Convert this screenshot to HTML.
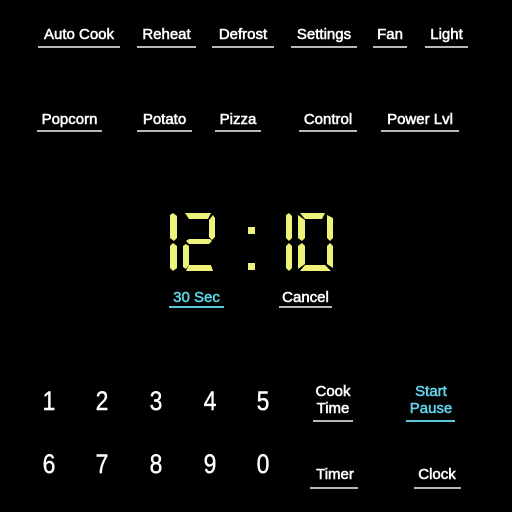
<!DOCTYPE html>
<html><head><style>
body{margin:0;width:512px;height:512px;background:#000;overflow:hidden;position:relative;font-family:"Liberation Sans",Arial,sans-serif;color:#fff}
.t{position:absolute;font-size:15px;line-height:15px;text-align:center;white-space:nowrap;-webkit-text-stroke:0.55px currentColor}
.u{position:absolute;height:2px;background:#b8b8b8}
.c{color:#5fd3e6}
.n{position:absolute;font-size:27px;line-height:26px;width:30px;text-align:center;transform:scaleX(0.85);-webkit-text-stroke:0.4px #fff}
</style></head><body>
<div class="t" style="left:38px;width:82px;top:27px">Auto Cook</div><div class="u" style="left:38px;width:82px;top:46px"></div>
<div class="t" style="left:137px;width:59px;top:27px">Reheat</div><div class="u" style="left:137px;width:59px;top:46px"></div>
<div class="t" style="left:212px;width:62px;top:27px">Defrost</div><div class="u" style="left:212px;width:62px;top:46px"></div>
<div class="t" style="left:291px;width:66px;top:27px">Settings</div><div class="u" style="left:291px;width:66px;top:46px"></div>
<div class="t" style="left:373px;width:34px;top:27px">Fan</div><div class="u" style="left:373px;width:34px;top:46px"></div>
<div class="t" style="left:425px;width:43px;top:27px">Light</div><div class="u" style="left:425px;width:43px;top:46px"></div>

<div class="t" style="left:37px;width:65px;top:112px">Popcorn</div><div class="u" style="left:37px;width:65px;top:130px"></div>
<div class="t" style="left:137px;width:55px;top:112px">Potato</div><div class="u" style="left:137px;width:55px;top:130px"></div>
<div class="t" style="left:215px;width:46px;top:112px">Pizza</div><div class="u" style="left:215px;width:46px;top:130px"></div>
<div class="t" style="left:299px;width:58px;top:112px">Control</div><div class="u" style="left:299px;width:58px;top:130px"></div>
<div class="t" style="left:381px;width:78px;top:112px">Power Lvl</div><div class="u" style="left:381px;width:78px;top:130px"></div>

<svg style="position:absolute;left:0;top:0" width="512" height="512" fill="#eef27a">
<polygon points="170,215 173,213 177,216 177,238 174,241 170,238"/>
<polygon points="170,246 173,243 177,246 177,268 173,271 170,268"/>
<polygon points="185,213 211,213 208,219 189,219"/>
<polygon points="213,215 215,218 215,237 212,240 209,237 209,220"/>
<polygon points="186,241 189,239 210,239 212,241 209,244 189,244"/>
<polygon points="183,246 186,244 189,246 189,265 186,269 183,267"/>
<polygon points="189,265 211,265 213,271 186,271"/>
<rect x="248" y="227" width="7" height="7"/>
<rect x="248" y="263" width="7" height="7"/>
<polygon points="286,215 289,213 292,216 292,238 289,241 286,238"/>
<polygon points="286,246 289,243 292,246 292,268 289,271 286,268"/>
<polygon points="300,213 325,213 322,219 305,219"/>
<polygon points="298,215 305,220 305,238 302,241 298,238"/>
<polygon points="298,246 302,243 305,246 305,264 298,269"/>
<polygon points="327,215 333,218 333,238 330,241 327,238"/>
<polygon points="327,246 330,243 333,246 333,268 327,264"/>
<polygon points="305,265 325,265 331,271 300,271"/>
</svg>

<div class="t c" style="left:169px;width:55px;top:290px">30 Sec</div><div class="u" style="left:169px;width:55px;top:306px;background:#5fc8d8"></div>
<div class="t" style="left:279px;width:53px;top:290px">Cancel</div><div class="u" style="left:279px;width:53px;top:306px"></div>

<div class="n" style="left:34px;top:388px">1</div>
<div class="n" style="left:87px;top:388px">2</div>
<div class="n" style="left:141px;top:388px">3</div>
<div class="n" style="left:195px;top:388px">4</div>
<div class="n" style="left:248px;top:388px">5</div>
<div class="n" style="left:34px;top:451px">6</div>
<div class="n" style="left:87px;top:451px">7</div>
<div class="n" style="left:141px;top:451px">8</div>
<div class="n" style="left:195px;top:451px">9</div>
<div class="n" style="left:248px;top:451px">0</div>

<div class="t" style="left:303px;width:60px;top:383px;line-height:17px">Cook<br>Time</div><div class="u" style="left:313px;width:40px;top:420px"></div>
<div class="t c" style="left:401px;width:60px;top:383px;line-height:17px">Start<br>Pause</div><div class="u" style="left:406px;width:49px;top:420px;background:#5fc8d8"></div>
<div class="t" style="left:305px;width:60px;top:467px">Timer</div><div class="u" style="left:310px;width:48px;top:487px"></div>
<div class="t" style="left:407px;width:60px;top:467px">Clock</div><div class="u" style="left:414px;width:47px;top:487px"></div>
</body></html>
